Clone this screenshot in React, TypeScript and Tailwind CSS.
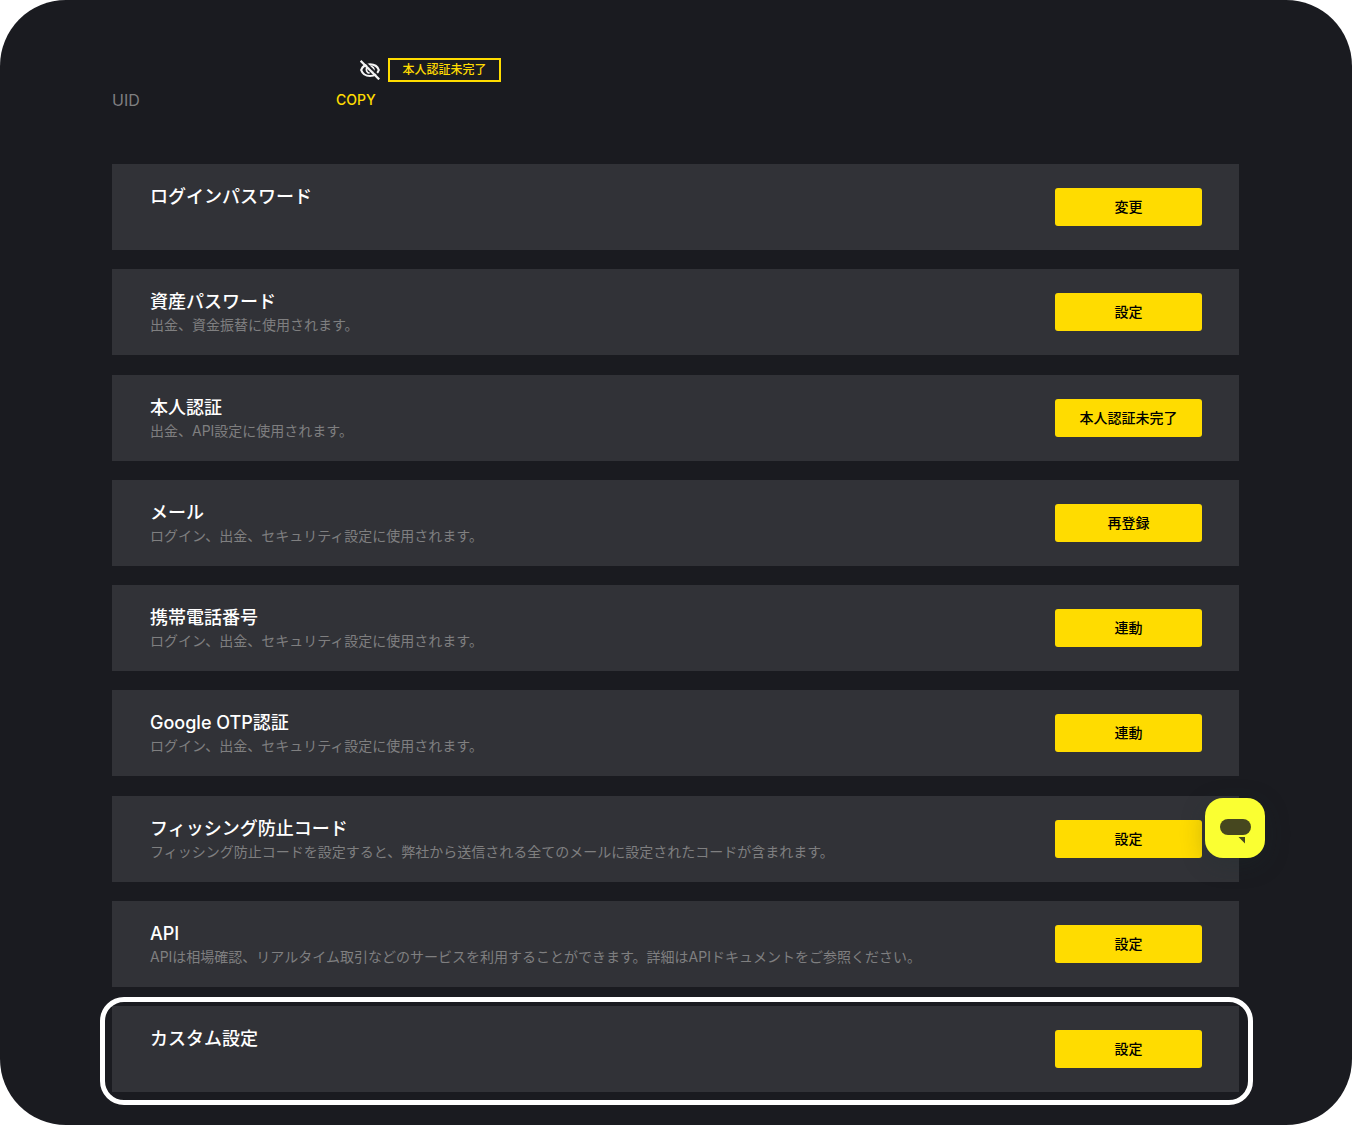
import clsx from "clsx";

interface SecurityItem {
  title: string;
  description?: string;
  action: string;
  highlighted?: boolean;
}

const ITEMS: SecurityItem[] = [
  { title: "ログインパスワード", action: "変更" },
  {
    title: "資産パスワード",
    description: "出金、資金振替に使用されます。",
    action: "設定",
  },
  {
    title: "本人認証",
    description: "出金、API設定に使用されます。",
    action: "本人認証未完了",
  },
  {
    title: "メール",
    description: "ログイン、出金、セキュリティ設定に使用されます。",
    action: "再登録",
  },
  {
    title: "携帯電話番号",
    description: "ログイン、出金、セキュリティ設定に使用されます。",
    action: "連動",
  },
  {
    title: "Google OTP認証",
    description: "ログイン、出金、セキュリティ設定に使用されます。",
    action: "連動",
  },
  {
    title: "フィッシング防止コード",
    description:
      "フィッシング防止コードを設定すると、弊社から送信される全てのメールに設定されたコードが含まれます。",
    action: "設定",
  },
  {
    title: "API",
    description:
      "APIは相場確認、リアルタイム取引などのサービスを利用することができます。詳細はAPIドキュメントをご参照ください。",
    action: "設定",
  },
  { title: "カスタム設定", action: "設定", highlighted: true },
];

function EyeOffIcon() {
  return (
    <svg viewBox="0 0 20 20" className="size-5" fill="none" aria-hidden="true">
      <path
        d="M1.2 10C2.4 6.6 5.8 4.4 10 4.4S17.6 6.6 18.8 10C17.6 13.6 14.2 16 10 16S2.4 13.6 1.2 10Z"
        stroke="#f4f4f4"
        strokeWidth="2.2"
      />
      <path
        d="M7 7.4C5.6 9.6 6.6 12.8 9.6 13.2"
        stroke="#f4f4f4"
        strokeWidth="1.8"
      />
      <path
        d="M9.6 6.6C12.6 6.2 14.6 8.8 13.6 11.6"
        stroke="#f4f4f4"
        strokeWidth="2.2"
      />
      <path d="M2.6 -0.4 20.6 17.6" stroke="#1a1b20" strokeWidth="1.6" />
      <path d="M0.6 0.8 19.2 19.4" stroke="#f4f4f4" strokeWidth="2.2" />
    </svg>
  );
}

function SecurityRow({ title, description, action, highlighted }: SecurityItem) {
  return (
    <li
      className={clsx(
        "flex items-start justify-between bg-[#313237] pr-[37px] pl-[38px]",
        highlighted && "relative",
      )}
    >
      <div className="pt-[21px]">
        <h2 className="text-lg leading-6 font-medium text-white">{title}</h2>
        {description && (
          <p className="text-sm leading-[22px] text-[#7f7f80]">{description}</p>
        )}
      </div>
      <button
        type="button"
        className="my-6 h-[38px] w-[147px] shrink-0 rounded-[3px] bg-[#ffdc00] text-sm font-medium text-black"
      >
        {action}
      </button>
      {highlighted && (
        <div className="pointer-events-none absolute -top-[9px] -right-[14px] -bottom-[13px] -left-3 rounded-3xl border-5 border-white" />
      )}
    </li>
  );
}

export default function App() {
  return (
    <div className="bg-white font-['Inter','Noto_Sans_CJK_JP',sans-serif]">
      <main className="flex min-h-screen flex-col rounded-[66px] bg-[#1a1b20] pt-[58px] pr-[113px] pb-[33px] pl-28">
        <header className="mb-[52px]">
          <div className="flex h-6 items-center gap-2 pl-[248px]">
            <button type="button" aria-label="表示切替">
              <EyeOffIcon />
            </button>
            <span className="flex h-6 w-[113px] items-center justify-center border-2 border-[#ffdc00] text-xs font-medium text-[#ffdc00]">
              本人認証未完了
            </span>
          </div>
          <div className="mt-1.5 flex h-6 items-center">
            <span className="w-56 text-base text-[#7f7f80]">UID</span>
            <button type="button" className="text-sm font-medium text-[#ffdc00]">
              COPY
            </button>
          </div>
        </header>

        <ul className="flex flex-1 flex-col justify-between gap-4">
          {ITEMS.map((item) => (
            <SecurityRow key={item.title} {...item} />
          ))}
        </ul>
      </main>

      <button
        type="button"
        aria-label="チャット"
        className="fixed right-[87px] bottom-[267px] size-[60px] rounded-[18px] bg-[#faff32] shadow-[0_6px_24px_rgba(26,46,46,0.25)]"
      >
        <svg viewBox="0 0 60 60" className="size-full" aria-hidden="true">
          <rect x="15" y="21" width="31" height="16" rx="8" fill="#46471f" />
          <path d="M33.5 39H40v6.5Z" fill="#46471f" />
        </svg>
      </button>
    </div>
  );
}
